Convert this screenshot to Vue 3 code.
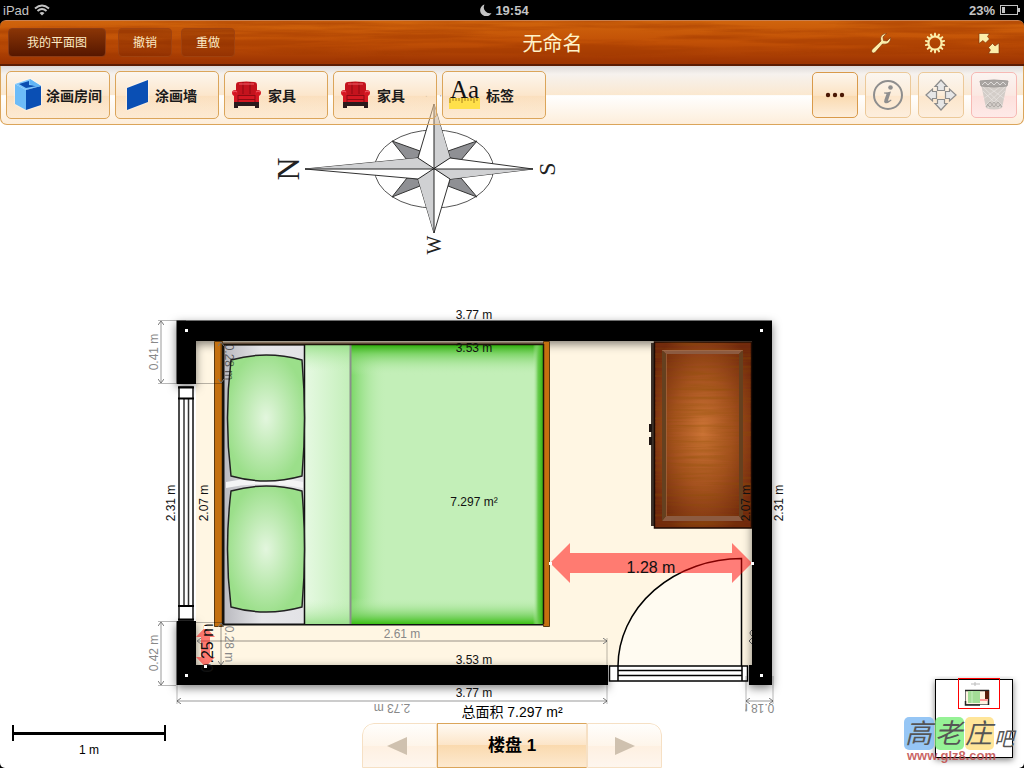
<script setup>
import { ref } from 'vue'

const tools = [
  { icon: 'room', label: '涂画房间', tight: true },
  { icon: 'wall', label: '涂画墙', tight: true },
  { icon: 'sofa', label: '家具' },
  { icon: 'sofa', label: '家具' },
  { icon: 'label', label: '标签' },
]

const floor = ref(1)

// wall measurements, r = rotation around the anchor point
const dims = [
  { t: '3.77 m', x: 474, y: 319, r: 0 },
  { t: '3.53 m', x: 474, y: 352, r: 0 },
  { t: '3.53 m', x: 474, y: 664, r: 0 },
  { t: '3.77 m', x: 474, y: 697, r: 0 },
  { t: '7.297 m²', x: 474, y: 506, r: 0 },
  { t: '2.31 m', x: 175, y: 503, r: -90 },
  { t: '2.07 m', x: 208, y: 503, r: -90 },
  { t: '2.07 m', x: 750, y: 503, r: -90 },
  { t: '2.31 m', x: 783, y: 503, r: -90 },
]

const softDims = [
  { t: '0.41 m', x: 158, y: 352, r: -90 },
  { t: '0.42 m', x: 158, y: 653, r: -90 },
  { t: '0.28 m', x: 225, y: 644, r: 90 },
  { t: '2.61 m', x: 402, y: 638, r: 0 },
  { t: '2.73 m', x: 392, y: 704, r: 180 },
]

const pillows = [0, 131]
const corners = [[186, 330], [761, 330], [186, 675], [761, 675], [205, 627], [205, 666], [550, 563], [752, 563]]
const teeth = Array.from({ length: 14 }, (_, i) => i * 360 / 14)
</script>

<template>
  <div class="app">
    <svg class="plan" viewBox="0 0 1024 768" role="img" aria-label="平面图">
      <defs>
        <radialGradient id="pillow" cx=".5" cy=".5" r=".62">
          <stop offset="0" stop-color="#e3f6de" />
          <stop offset=".85" stop-color="#9bdf8a" />
        </radialGradient>
        <linearGradient id="sheet">
          <stop offset="0" stop-color="#e6f9e2" />
          <stop offset="1" stop-color="#c3efb9" />
        </linearGradient>
        <linearGradient id="mattress" x2="1">
          <stop offset="0" stop-color="#b9b9bf" />
          <stop offset=".12" stop-color="#e6e6e9" />
          <stop offset="1" stop-color="#d2d2d6" />
        </linearGradient>
        <linearGradient id="edgeTop" x2="0" y2="1">
          <stop offset="0" stop-color="#2fae0c" />
          <stop offset=".3" stop-color="#6fcf57" stop-opacity=".8" />
          <stop offset="1" stop-color="#c3efb8" stop-opacity="0" />
        </linearGradient>
        <linearGradient id="edgeBottom" x2="0" y1="1" y2="0">
          <stop offset="0" stop-color="#3cc015" />
          <stop offset=".3" stop-color="#6fcf57" stop-opacity=".8" />
          <stop offset="1" stop-color="#c3efb8" stop-opacity="0" />
        </linearGradient>
        <linearGradient id="edgeLeft">
          <stop offset="0" stop-color="#7bd767" />
          <stop offset="1" stop-color="#c3efb8" stop-opacity="0" />
        </linearGradient>
        <linearGradient id="edgeRight">
          <stop offset="0" stop-color="#c3efb8" stop-opacity="0" />
          <stop offset=".5" stop-color="#6acb50" />
          <stop offset="1" stop-color="#36b812" />
        </linearGradient>
        <linearGradient id="sheetEnd" x2="0" y2="1">
          <stop offset="0" stop-color="#8fdc7f" stop-opacity=".8" />
          <stop offset="1" stop-color="#c3efb8" stop-opacity="0" />
        </linearGradient>
        <linearGradient id="sheetFoot" x2="0" y1="1" y2="0">
          <stop offset="0" stop-color="#8fdc7f" stop-opacity=".8" />
          <stop offset="1" stop-color="#c3efb8" stop-opacity="0" />
        </linearGradient>
        <radialGradient id="cabinet" cx=".5" cy=".48" r=".6">
          <stop offset="0" stop-color="#cc7436" />
          <stop offset=".5" stop-color="#a5521f" />
          <stop offset="1" stop-color="#70280d" />
        </radialGradient>
        <filter id="grain" x="0" y="0" width="1" height="1">
          <feTurbulence type="fractalNoise" baseFrequency=".015 .35" numOctaves="3" seed="4" />
          <feColorMatrix values="0 0 0 0 .25  0 0 0 0 .08  0 0 0 0 0  1.6 0 0 0 -.6" />
        </filter>
        <filter id="shadow" x="-.1" y="-.1" width="1.2" height="1.2">
          <feDropShadow dx="0" dy="3" stdDeviation="5" flood-opacity=".5" />
        </filter>
        <marker id="tick" viewBox="0 0 6 6" refX="5" refY="3" markerWidth="6" markerHeight="6" markerUnits="userSpaceOnUse" orient="auto-start-reverse">
          <path d="M1 0L5 3L1 6" fill="none" stroke="#777" />
        </marker>
        <clipPath id="cut"><rect x="745" y="700" width="32" height="16" /></clipPath>
      </defs>

      <!-- compass -->
      <g class="compass">
        <ellipse cx="434" cy="169" rx="59.500" ry="39" fill="none" stroke="#555" />
        <g fill="#8f9094" stroke="#333">
          <path d="M392 141L420 151L418 158L407 160Z" />
          <path d="M477 141L448 151L450 158L461 160Z" />
          <path d="M392 197L420 186L418 179L407 178Z" />
          <path d="M477 197L448 186L450 179L461 178Z" />
        </g>
        <path d="M305 169L418 158L434 104L450 158L533 169L450 179L434 233L418 179Z" fill="#fff" stroke="#333" />
        <path d="M305 169L418 158L434 169ZM434 104L450 158L434 169ZM533 169L450 179L434 169ZM434 233L418 179L434 169Z" fill="#d0d1d3" />
        <path d="M305 169H533M434 104V233M418 158L450 179M450 158L418 179" stroke="#222" />
        <g class="points">
          <text transform="translate(299 169) rotate(-90)" font-size="32">N</text>
          <text transform="translate(555 169) rotate(-90)" font-size="24">S</text>
          <text transform="translate(441 245) rotate(-90)" font-size="20">W</text>
          <text transform="translate(441 90) rotate(-90)" font-size="24">E</text>
        </g>
      </g>

      <!-- floor and walls -->
      <path d="M196 340H752V666H196Z" fill="#fff6e3" />
      <g filter="url(#shadow)">
        <path d="M176.500 384V320.500H772V685H749V665H752V341H196V384ZM176.500 621H196V665H608V685H176.500Z" />
      </g>

      <!-- window -->
      <path d="M179 387H193V620H179Z" fill="#fff" stroke="#111" stroke-width="1.500" />
      <path d="M184 398V606M188.500 398V606" stroke="#333" stroke-width="1.500" />
      <path d="M178 387.500H194M178 398.500H194M178 606H194M178 619.500H194" stroke="#000" stroke-width="2" />

      <!-- bed -->
      <g>
        <path d="M222 341H544V345H222Z" fill="#a49d8e" />
        <rect x="223.500" y="344.500" width="320" height="280" fill="url(#mattress)" stroke="#111" stroke-width="2" />
        <path d="M226 482Q264 474 303 482V488Q264 480 226 488Z" fill="#f4f4f5" />
        <rect x="305" y="345" width="46" height="279" fill="url(#sheet)" />
        <rect x="305" y="345" width="46" height="26" fill="url(#sheetEnd)" />
        <rect x="305" y="600" width="46" height="24" fill="url(#sheetFoot)" />
        <rect x="351" y="345" width="192" height="279" fill="#c3efb8" />
        <rect x="351" y="345" width="36" height="279" fill="url(#edgeLeft)" />
        <rect x="351" y="345" width="192" height="30" fill="url(#edgeTop)" />
        <rect x="351" y="598" width="192" height="26" fill="url(#edgeBottom)" />
        <rect x="533" y="345" width="10" height="279" fill="url(#edgeRight)" />
        <path d="M350.500 345V624" stroke="#8a8f8a" stroke-width="2" />
        <path d="M304.500 345V624" stroke="#111" stroke-width="1.500" />
        <path
          v-for="dy in pillows"
          :key="dy"
          :transform="`translate(0 ${dy})`"
          d="M231 360Q266 350 302 360Q307 418 302 476Q266 486 231 476Q224 418 231 360Z"
          fill="url(#pillow)"
          stroke="#222"
          stroke-width="1.500"
        />
        <path d="M214.500 341.500H222.500V626.500H214.500ZM543.500 341.500H549.500V626.500H543.500Z" fill="#c4700f" stroke="#5c3a10" />
        <path d="M222.500 343V626M543.500 344V624M223 344.500H543" stroke="#1c1408" stroke-width="1.500" />
        <path d="M223 343H543" stroke="#6b4a32" />
      </g>

      <!-- cabinet -->
      <g>
        <rect x="651" y="343" width="4" height="183" fill="#3c3028" />
        <path d="M649 424H652V432H649ZM649 437H652V445H649Z" fill="#1e1411" />
        <rect x="654.500" y="342" width="97" height="186" fill="url(#cabinet)" stroke="#1d0a03" stroke-width="1.500" />
        <rect x="655" y="342" width="96" height="185" filter="url(#grain)" opacity=".5" />
        <path d="M662 350H743L739 354H666ZM662 521H743L739 516H666Z" fill="#8c5b41" />
        <path d="M662 350L666 354V516L662 521ZM743 350L739 354V516L743 521Z" fill="#65401f" />
        <path d="M666.500 354V516M662 350.500H743" stroke="#a8704a" stroke-opacity=".6" />
      </g>

      <!-- door -->
      <path d="M618 666A124 108 0 0 1 741.500 558.500V666Z" fill="#fffbf1" />
      <path d="M618 666A124 108 0 0 1 741.500 558.500V666" fill="none" stroke="#000" stroke-width="1.500" />
      <rect x="609.500" y="666" width="138" height="15" fill="#fff" stroke="#000" stroke-width="1.500" />
      <path d="M618 666V681M742 666V681M618 670.500H742M618 675.500H742" stroke="#000" stroke-width="1.500" />

      <!-- secondary dimension lines -->
      <g class="lines">
        <path d="M161 321V383" /><path d="M161 622V685" />
        <path d="M221 342V383" /><path d="M221 623V665" />
        <path d="M197 641H607" /><path d="M177 701H607" />
        <path d="M746 701H773" />
      </g>
      <path d="M158 320.500H186M158 383.500H176M196 383.500H222M158 621.500H176M158 685.500H176M196 622.500H222M177 685V704M607 638V665M607 685V704M746 676V712M773 676V704" stroke="#000" stroke-opacity=".28" />
      <path d="M752 630Q748 633 752 636M752 638L749 641L752 644" fill="none" stroke="#555" />

      <text
        v-for="(d, i) in softDims"
        :key="'s' + i"
        class="dim soft"
        :transform="`translate(${d.x} ${d.y}) rotate(${d.r})`"
      >{{ d.t }}</text>
      <text class="dim" transform="translate(225 362) rotate(90)" fill-opacity=".6">0.28 m</text>
      <g clip-path="url(#cut)">
        <text class="dim soft" transform="translate(756 704) rotate(180)">0.18 m</text>
      </g>
      <text
        v-for="(d, i) in dims"
        :key="'d' + i"
        class="dim"
        :transform="`translate(${d.x} ${d.y}) rotate(${d.r})`"
      >{{ d.t }}</text>

      <!-- distance arrows -->
      <g fill="#f00" fill-opacity=".5">
        <path d="M550 563L570 543V553H732V543L752 563L732 583V573H570V583Z" />
        <path d="M205.500 627L215 637H210V657H215L205.500 667L196 657H201V637H196Z" />
      </g>
      <text class="dim big" x="651" y="573">1.28 m</text>
      <text class="dim big" transform="translate(213 648) rotate(-90)">0.25 m</text>
      <rect v-for="(c, i) in corners" :key="'c' + i" :x="c[0] - 1" :y="c[1] - 1" width="3" height="3" fill="#fff" />
    </svg>

    <div class="top">
      <div class="status">
        <span class="carrier">iPad
          <svg width="16" height="12" viewBox="0 0 16 12" fill="none" stroke="#c4c4c4" stroke-width="2">
            <path d="M1 4.500Q8 -1.500 15 4.500M3.500 7Q8 3 12.500 7" />
            <path d="M5.500 9Q8 7 10.500 9L8 11.500Z" fill="#c4c4c4" stroke="none" />
          </svg>
        </span>
        <span class="clock">
          <svg width="12" height="12" viewBox="0 0 12 12"><path d="M4.500 .500A6 6 0 1 0 11.500 9A6 6 0 0 1 4.500 .500Z" fill="#c4c4c4" /></svg>
          19:54
        </span>
        <span class="power">23%
          <svg width="21" height="10" viewBox="0 0 21 10">
            <rect x=".500" y=".500" width="17" height="9" fill="none" stroke="#c4c4c4" />
            <path d="M2 2H5V8H2ZM18 3H20V7H18Z" fill="#c4c4c4" />
          </svg>
        </span>
      </div>
      <header>
        <svg class="wood" preserveAspectRatio="none" aria-hidden="true">
          <filter id="wood" x="0" y="0" width="1" height="1">
            <feTurbulence type="fractalNoise" baseFrequency=".006 .12" numOctaves="4" seed="9" />
            <feColorMatrix values="0 0 0 0 .35  0 0 0 0 .04  0 0 0 0 0  3.5 0 0 0 -1.4" />
          </filter>
          <rect width="100%" height="100%" filter="url(#wood)" />
        </svg>
        <div class="left">
          <button class="dark">我的平面图</button>
          <button>撤销</button>
          <button>重做</button>
        </div>
        <h1>无命名</h1>
        <div class="right">
          <button aria-label="工具">
            <svg width="22" height="22" viewBox="0 0 22 22">
              <path d="M15.500 1.500Q11 2 10.500 6Q10.500 7.500 11 9L2 17.500Q1 19 2 20.500Q3.500 21.500 5 20.500L12.500 12Q18 13 20 9Q21 7 20.500 5.500L17 9L13.500 8.500L13 5L16.500 1.500Z" fill="#fbeeaa" stroke="#7a2c05" stroke-width=".6" />
            </svg>
          </button>
          <button aria-label="设置">
            <svg width="22" height="22" viewBox="0 0 22 22">
              <circle cx="11" cy="11" r="6.500" fill="none" stroke="#fbeeaa" stroke-width="2" />
              <path v-for="a in teeth" :key="a" d="M9.800 4.500L10.200 .800H11.800L12.200 4.500Z" fill="#fbeeaa" :transform="`rotate(${a} 11 11)`" />
            </svg>
          </button>
          <button aria-label="全屏">
            <svg width="22" height="22" viewBox="0 0 22 22" fill="#fbeeaa" stroke="#7a2c05" stroke-width=".6">
              <path d="M1 1.500H11.500L9.500 4.500L11.500 7L7.500 11L5 8.500L1 11.500Z" />
              <path d="M21 21.500H10.500L12.500 18L10.500 15.500L14.500 11.500L17 14L21 11Z" />
            </svg>
          </button>
        </div>
      </header>
    </div>

    <nav class="toolbar">
      <button v-for="(tool, i) in tools" :key="i" class="tool" :class="{ tight: tool.tight }">
        <svg v-if="tool.icon === 'room'" width="31" height="36" viewBox="-2 -2 31 36">
          <g class="glow">
            <path d="M0 5L15 0L26 7L11 11Z" fill="#7cc5fb" />
            <path d="M4 5L14 2L14 6L22 7L11 9Z" fill="#0b4db0" />
            <path d="M0 5L11 11V31L0 25Z" fill="#6dbcf8" />
            <path d="M11 11L26 7V26L11 31Z" fill="#0a4fb4" />
            <path d="M15 0V5L22 8L26 7Z" fill="#62b4f5" />
          </g>
        </svg>
        <svg v-else-if="tool.icon === 'wall'" width="31" height="36" viewBox="-5 -3 31 36">
          <path class="glow" d="M0 8L21 0V22L0 30Z" fill="#0a4fb4" />
        </svg>
        <svg v-else-if="tool.icon === 'sofa'" width="31" height="30" viewBox="0 0 31 30">
          <path d="M3 19H28V28H24V26H7V28H3Z" fill="#2b1a1c" />
          <path d="M5 5Q5 2 8 2Q15 1 23 2Q26 2 26 5V19H5Z" fill="#c4131d" />
          <path d="M12 2V14M19 2V14" stroke="#8e0a12" />
          <path d="M1 13Q1 10 4 10Q7 10 7 13V15H24V13Q24 10 27 10Q30 10 30 13Q30 15 28 16V22H3V16Q1 15 1 13Z" fill="#d41722" />
          <path d="M7 15.500H24M7 19.500H24M7 15V22M24 15V22" stroke="#8e0a12" />
          <path d="M2 12Q4 10 6 12M25 12Q27 10 29 12M8 4H23" stroke="#f0606a" fill="none" />
        </svg>
        <svg v-else class="label-icon" width="31" height="30" viewBox="0 0 31 30">
          <rect y="18" width="31" height="11" fill="#ffe04a" />
          <path d="M1 18V23M4 18V21M7 18V21M10 18V21M13 18V23M16 18V21M19 18V21M22 18V21M25 18V23M28 18V21" stroke="#a8801c" />
          <text class="aa" x="1" y="18">Aa</text>
        </svg>
        <span>{{ tool.label }}</span>
      </button>

      <div class="actions">
        <button class="act on" aria-label="更多">
          <svg width="20" height="6" viewBox="0 0 20 6" fill="#4a1703"><circle cx="3" cy="3" r="2.200" /><circle cx="10" cy="3" r="2.200" /><circle cx="17" cy="3" r="2.200" /></svg>
        </button>
        <button class="act" aria-label="信息">
          <svg width="32" height="32" viewBox="0 0 32 32">
            <circle cx="16" cy="16" r="14" fill="none" stroke="#8e8e8e" stroke-width="2" />
            <circle cx="18.500" cy="8.500" r="2.300" fill="#8e8e8e" />
            <path d="M12 13.500Q16 13.500 19 12.500L16 21.500Q16 22.500 19 20.500L19.500 21.500Q15.500 25 13 24Q11.500 23 12.500 20.500L14.500 15Q14 14.500 12 14.500Z" fill="#8e8e8e" />
          </svg>
        </button>
        <button class="act" aria-label="移动">
          <svg width="32" height="32" viewBox="0 0 32 32" fill="#e6e6e6" stroke="#8c8c8c" stroke-width="1.200">
            <path v-for="a in [0, 90, 180, 270]" :key="a" d="M16 1L22 7.500H19.500V11.500H12.500V7.500H10Z" :transform="`rotate(${a} 16 16)`" />
          </svg>
        </button>
        <button class="act trash" aria-label="删除">
          <svg width="30" height="32" viewBox="0 0 30 32">
            <path d="M2 5L7 29Q15 32 23 29L28 5Z" fill="#d3cdc8" />
            <path d="M4 12L21 29M3 7L24 27M9 8L26 20M26 12L9 29M27 7L6 27M21 8L4 20" stroke="#f3f0ee" stroke-width=".6" opacity=".8" />
            <path d="M7 28L11 23L15 28L19 23L23 28M8 25L11 28L15 23L19 28L22 25" fill="none" stroke="#a5a09c" stroke-width=".8" />
            <path d="M1 2Q15 0 29 2L28 7Q15 9 2 7Z" fill="#a9a5a2" stroke="#a09c99" />
            <path d="M3 6L6 3L9 6L12 3L15 6L18 3L21 6L24 3L27 6" fill="none" stroke="#dedbd9" />
          </svg>
        </button>
      </div>
    </nav>

    <footer>
      <div class="scale">
        <div class="bar"></div>
        <span>1 m</span>
      </div>
      <div class="center">
        <p>总面积 7.297 m²</p>
        <div class="switcher">
          <button aria-label="上一个" @click="floor = Math.max(1, floor - 1)">
            <svg width="20" height="18" viewBox="0 0 20 18"><path d="M0 9L20 0V18Z" fill="#cfc1af" /></svg>
          </button>
          <strong>楼盘 {{ floor }}</strong>
          <button aria-label="下一个" @click="floor++">
            <svg width="20" height="18" viewBox="0 0 20 18"><path d="M20 9L0 0V18Z" fill="#cfc1af" /></svg>
          </button>
        </div>
      </div>
      <div class="mini">
        <svg width="120" height="92" viewBox="0 0 120 92">
          <rect class="sheet" x="31.500" y="3.500" width="77" height="78" fill="#fff" stroke="#000" />
          <path d="M67 8H76M71 6V10" stroke="#bbb" />
          <rect x="61.500" y="14.500" width="23" height="14" fill="#fff3e2" stroke="#777" />
          <path d="M61 14.500H85M61.500 25V29H76M84.500 14V29" fill="none" stroke="#222" stroke-width="1.500" />
          <rect x="64" y="15" width="12" height="12" fill="#a3dc97" />
          <path d="M68 15V27" stroke="#c9eec1" />
          <rect x="81" y="15" width="4" height="8" fill="#5a1d0a" />
          <path d="M76 24H84" stroke="#f99" stroke-width="2" />
          <rect x="54.500" y="2.500" width="41" height="30" fill="none" stroke="#f00" />
          <g opacity=".8">
            <rect y="41" width="30" height="33" rx="5" fill="#7db9f3" />
            <rect x="31" y="41" width="29" height="33" rx="5" fill="#7df07d" />
            <rect x="61" y="41" width="29" height="33" rx="5" fill="#ffdf80" />
          </g>
          <g class="brush">
            <text x="1" y="67" font-size="27">高</text>
            <text x="31" y="67" font-size="27">老</text>
            <text x="61" y="67" font-size="27">庄</text>
            <text x="90" y="70" font-size="20">吧</text>
          </g>
          <text class="site" x="3" y="84">www.glz8.com</text>
        </svg>
      </div>
    </footer>
  </div>
</template>

<style>
html, body {
  background: #000;
}

body {
  margin: 0;
}
</style>

<style scoped>
.app {
  position: relative;
  min-height: 100vh;
  display: flex;
  flex-direction: column;
  overflow: hidden;
  background: #fff;
  border-radius: 0 0 5px 5px;
  font-family: "Liberation Sans", "Noto Sans CJK SC", sans-serif;
}

.plan {
  position: absolute;
  inset: 0;
  width: 100%;
  height: 100%;
}

.dim {
  font-size: 12px;
  text-anchor: middle;
  fill: #111;
}

.soft {
  fill: #888;
}

.big {
  font-size: 16px;
}

.points text {
  font-family: "Liberation Serif", serif;
  text-anchor: middle;
  fill: #222;
}

.lines path {
  stroke: #000;
  stroke-width: 2px;
  stroke-opacity: .2;
  marker-start: url(#tick);
  marker-end: url(#tick);
}

.top {
  position: relative;
  background: #000;
}

.status {
  height: 20px;
  padding: 0 3px;
  display: grid;
  grid-template-columns: 1fr auto 1fr;
  align-items: center;
  color: #c4c4c4;
  font-size: 13px;
  font-weight: bold;
}

.status span {
  display: flex;
  align-items: center;
  gap: 5px;
}

.status .clock {
  gap: 3px;
}

/* keeps the time itself in the middle */
.clock svg {
  margin-left: -15px;
}

.carrier {
  font-weight: normal;
}

.power {
  justify-content: flex-end;
}

header {
  position: relative;
  height: 46px;
  box-sizing: border-box;
  padding: 0 8px;
  display: grid;
  grid-template-columns: auto 1fr auto;
  align-items: center;
  overflow: hidden;
  border-top: 1px solid #c98050;
  border-bottom: 2px solid #5b1c03;
  border-radius: 6px 6px 0 0;
  background: linear-gradient(#d0640c, #c15006 50%, #9a3202);
}

.wood {
  position: absolute;
  inset: 0;
  width: 100%;
  height: 100%;
  opacity: .5;
}

.left, .right {
  position: relative;
  display: flex;
  align-items: center;
  gap: 9px;
}

button {
  margin: 0;
  padding: 0;
  font-family: inherit;
  cursor: pointer;
}

.left button {
  height: 29px;
  padding: 0 14px 2px;
  border: 1px solid #a0420f;
  border-radius: 4px;
  background: rgba(90, 20, 0, .25);
  color: #fdebc5;
  font-size: 12px;
}

.left .dark {
  margin-right: 3px;
  padding: 0 18px 2px;
  border-color: #8c3b14;
  background: linear-gradient(#8a3506, #561700);
}

h1 {
  position: relative;
  margin: 0;
  text-align: center;
  color: #fff3c9;
  font-size: 20px;
  font-weight: normal;
}

.right {
  justify-content: flex-end;
  gap: 32px;
  padding-right: 16px;
}

.right button {
  border: 0;
  background: none;
  height: 22px;
}

.toolbar {
  position: relative;
  box-sizing: border-box;
  height: 59px;
  padding: 5px 6px 0 5px;
  display: flex;
  align-items: flex-start;
  gap: 5px;
  border: 1px solid #dba55a;
  border-top: 0;
  border-radius: 0 0 7px 7px;
  background: linear-gradient(#dedad9, #f6f2ee 14%, #fbe8d0 50%, rgba(255, 255, 255, .45) 51%, rgba(250, 205, 150, .35));
}

.tool {
  box-sizing: border-box;
  width: 104px;
  height: 48px;
  padding-left: 6px;
  display: flex;
  align-items: center;
  gap: 6px;
  border: 1px solid #dba55a;
  border-radius: 5px;
  background: linear-gradient(#fcf6ee, #fce6cb 51%, rgba(243, 165, 70, .35) 52%, rgba(246, 190, 120, .15));
  color: #1a1a1a;
  font-size: 14px;
  font-weight: bold;
  white-space: nowrap;
}

.tight {
  gap: 2px;
}

.glow {
  filter: drop-shadow(0 0 1px #fff);
}

.label-icon {
  overflow: visible;
}

.aa {
  font: 25px "Liberation Serif", serif;
  fill: #111;
}

.actions {
  margin-left: auto;
  padding-top: 1px;
  display: flex;
  gap: 7px;
}

.act {
  box-sizing: border-box;
  width: 46px;
  height: 46px;
  display: flex;
  align-items: center;
  justify-content: center;
  border: 1px solid #ecc999;
  border-radius: 5px;
  background: linear-gradient(#fbf6f0, #fcecd8 51%, #fce6cb 52%, #fdeedd);
}

.act.on {
  border-color: #d99a4a;
  background: linear-gradient(#fcf6ee, #fce3c3 51%, #fadab0 52%, #fdeedb);
}

.act.trash {
  border-color: #f7b9b4;
  background: linear-gradient(#fbf4f1, #fbe8e2 51%, #fde0dc 52%, #feeae8);
}

footer {
  position: relative;
  margin-top: auto;
  display: grid;
  grid-template-columns: 1fr 300px 1fr;
  align-items: end;
}

.scale {
  width: 154px;
  padding: 0 0 10px 12px;
  text-align: center;
  font-size: 12px;
  line-height: 16px;
}

.bar {
  height: 16px;
  margin-bottom: 1px;
  box-sizing: border-box;
  border: solid #000;
  border-width: 0 2px;
  background: linear-gradient(#000, #000) center / 100% 3px no-repeat;
}

.center p {
  margin: 0 0 1px;
  text-align: center;
  font-size: 14px;
  line-height: 20px;
}

.switcher {
  height: 45px;
  display: grid;
  grid-template-columns: 1fr 2fr 1fr;
  overflow: hidden;
  border-radius: 12px 12px 0 0;
}

.switcher button {
  display: flex;
  align-items: center;
  justify-content: center;
  border: 1px solid #f6e0c4;
  border-radius: 12px 0 0 0;
  background: linear-gradient(#fffefc, #fef5ea 50%, #fef0e1 51%, #fef6ee);
}

.switcher button:first-child {
  padding-right: 5px;
}

.switcher button:last-child {
  border-radius: 0 12px 0 0;
}

.switcher strong {
  border: 1px solid #dba55a;
  border-right-color: #f6e0c4;
  background: linear-gradient(#fffaf3, #fce5c8 49%, #fadaaf 50%, #fde9cf);
  text-align: center;
  font-size: 17px;
  line-height: 43px;
}

.mini {
  display: flex;
  justify-content: flex-end;
}

.mini .sheet {
  filter: drop-shadow(0 2px 3px rgba(0, 0, 0, .5));
}

.brush text {
  font-family: "Noto Sans CJK SC", sans-serif;
  font-style: italic;
  fill: #555;
}

.site {
  font-size: 13px;
  font-weight: bold;
  fill: #c04848;
  fill-opacity: .85;
}
</style>
